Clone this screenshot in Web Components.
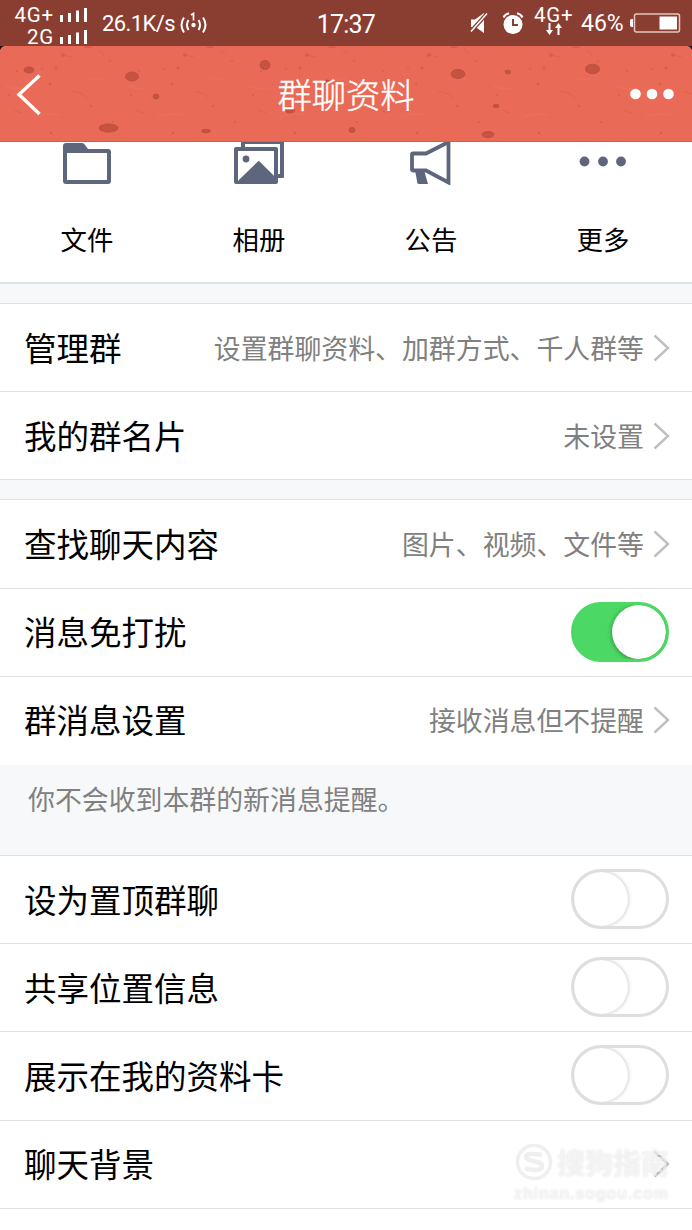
<!DOCTYPE html>
<html lang="zh-CN">
<head>
<meta charset="utf-8">
<title>群聊资料</title>
<style>
    body {
        margin: 0;
        background: #fff;
        color: #000;
        font-family: Roboto, "Noto Sans CJK SC", sans-serif;
    }
</style>
</head>
<body>
<chat-page>
    <status-bar></status-bar>
    <title-bar>群聊资料</title-bar>
    <shortcut-bar>
        <shortcut-item icon="folder">文件</shortcut-item>
        <shortcut-item icon="album">相册</shortcut-item>
        <shortcut-item icon="notice">公告</shortcut-item>
        <shortcut-item icon="more">更多</shortcut-item>
    </shortcut-bar>
    <settings-group spaced>
        <settings-row label="管理群" arrow>设置群聊资料、加群方式、千人群等</settings-row>
        <settings-row label="我的群名片" arrow>未设置</settings-row>
    </settings-group>
    <settings-group spaced>
        <settings-row label="查找聊天内容" arrow>图片、视频、文件等</settings-row>
        <settings-row label="消息免打扰"><toggle-switch on></toggle-switch></settings-row>
        <settings-row label="群消息设置" arrow borderless>接收消息但不提醒</settings-row>
    </settings-group>
    <group-note>你不会收到本群的新消息提醒。</group-note>
    <settings-group>
        <settings-row label="设为置顶群聊"><toggle-switch></toggle-switch></settings-row>
        <settings-row label="共享位置信息"><toggle-switch></toggle-switch></settings-row>
        <settings-row label="展示在我的资料卡"><toggle-switch></toggle-switch></settings-row>
        <settings-row label="聊天背景" arrow></settings-row>
    </settings-group>
    <site-mark></site-mark>
</chat-page>

<script>
// Small base class: every component only has to supply its markup.
class BaseElement extends HTMLElement {
    constructor() {
        super();
        this.attachShadow({ mode: 'open' });
    }

    connectedCallback() {
        this.shadowRoot.innerHTML = this.render();
    }
}

// ### Page frame ###
class ChatPage extends BaseElement {
    render() {
        return `
            <style>
                :host {
                    display: flex;
                    flex-direction: column;
                    position: relative;
                    width: 692px;
                    height: 1230px;
                    overflow: hidden;
                }
            </style>
            <slot></slot>
        `;
    }
}

// ### Phone status bar ###
class StatusBar extends BaseElement {
    render() {
        const bars = `
            <svg width="27" height="14" viewBox="0 0 27 14" fill="#fff">
                <path d="M0 7h3v7H0zM8 5h3v9H8zM16 2.500h3v11.500h-3zM24 0h3v14h-3z"/>
            </svg>`;
        return `
            <style>
                :host {
                    display: grid;
                    grid-template-columns: 236px 220px 236px;
                    height: 46px;
                    background: #8a3e31;
                    color: #fff;
                    font-size: 22px;
                    line-height: 46px;
                    white-space: nowrap;
                }
                .side { display: flex; }
                .left { padding-left: 10px; }
                .signals { width: 77px; padding-top: 5px; }
                .signal {
                    display: flex;
                    justify-content: flex-end;
                    gap: 6px;
                    height: 22px;
                    line-height: 20px;
                    font-size: 20.500px;
                    letter-spacing: .8px;
                }
                .signal svg { margin-top: 3px; }
                .speed { margin-left: 15px; width: 74px; padding-top: 1px; letter-spacing: -.6px; }
                .hotspot { margin: 12px 0 0 4px; }
                .time { font-size: 25px; padding-top: 2px; letter-spacing: -.8px; text-align: center; }
                .mute { margin: 13px 0 0 14px; }
                .alarm { margin: 12px 0 0 14px; }
                .net { width: 42px; margin-left: 10px; padding-top: 5px; font-size: 20.500px; line-height: 20px; letter-spacing: .8px; }
                .net svg { display: block; margin: -2px 0 0 12px; }
                .level { width: 45px; margin-left: 5px; padding-top: 1px; font-size: 23px; }
                .battery { margin: 13px 0 0 4px; }
            </style>
            <div class="side left">
                <div class="signals">
                    <div class="signal"><span>4G+</span>${bars}</div>
                    <div class="signal"><span>2G</span>${bars}</div>
                </div>
                <span class="speed">26.1K/s</span>
                <svg class="hotspot" width="27" height="22" viewBox="0 0 27 22" fill="none" stroke="#fff" stroke-width="2">
                    <circle cx="13.500" cy="13" r="2.200" fill="#fff" stroke="none"/>
                    <path d="M11 3l2.500-1.500V8.500" stroke-width="1.700"/>
                    <path d="M8.500 8q-3 5 0 10M18.500 8q3 5 0 10M4 5.500q-5 7.500 0 15M23 5.500q5 7.500 0 15"/>
                </svg>
            </div>
            <span class="time">17:37</span>
            <div class="side">
                <svg class="mute" width="18" height="21" viewBox="0 0 18 21" fill="none">
                    <path d="M1 6.500h4L14 0v20l-8.500-6H1z" fill="#fff"/>
                    <path d="M1 18.500L17 .5" stroke="#8a3e31" stroke-width="4"/>
                    <path d="M1 18.500L17 .5" stroke="#fff" stroke-width="1.500"/>
                </svg>
                <svg class="alarm" width="22" height="23" viewBox="0 0 22 23" fill="none">
                    <circle cx="11" cy="12.500" r="9.500" fill="#fff"/>
                    <path d="M1.500 5.500Q3 2 7 1.200M20.500 5.500Q19 2 15 1.200" stroke="#fff" stroke-width="2"/>
                    <path d="M11 7v6h5" stroke="#8a3e31" stroke-width="2"/>
                </svg>
                <div class="net">4G+
                    <svg width="16" height="12" viewBox="0 0 16 12" fill="none" stroke="#fff" stroke-width="2">
                        <path d="M3.500 0v9M12.500 12V3"/>
                        <path d="M0 7h7l-3.500 5zM9 5h7l-3.500-5z" fill="#fff" stroke="none"/>
                    </svg>
                </div>
                <span class="level">46%</span>
                <svg class="battery" width="51" height="20" viewBox="0 0 51 20">
                    <path d="M3 6v8H1.500Q0 14 0 12V8Q0 6 1.500 6z" fill="#fff"/>
                    <rect x="4.500" y="1" width="45" height="18" rx="2" fill="none" stroke="#e5c8bd" stroke-width="1.500"/>
                    <rect x="29.500" y="3.500" width="17.500" height="13" fill="#fff"/>
                </svg>
            </div>
        `;
    }
}

// ### Title bar with the speckled theme ###
class TitleBar extends BaseElement {
    render() {
        // cx, cy, rx, ry of the larger craters.
        const craters = [
            [29, 24, 5, 3], [132, 30.500, 6.500, 4.500], [156, 50.500, 2.800, 2.400],
            [108.500, 82, 9.500, 4], [206, 85, 4.500, 1.800], [265, 19, 5, 4.500],
            [290, 64, 4.500, 3], [327, 36, 3, 2], [352, 84, 3, 2.500],
            [458, 28, 7, 4.500], [508, 26, 2.500, 2], [592.500, 23, 7, 4.800],
            [496, 60, 3, 1.700], [488, 88.500, 6, 3]
        ];
        return `
            <style>
                :host {
                    display: grid;
                    grid-template-columns: 200px 1fr 200px;
                    align-items: center;
                    position: relative;
                    box-sizing: border-box;
                    height: 96px;
                    background: #e96a56;
                    color: #fff;
                    border-bottom: 1px solid #d75d52;
                }
                .skin { position: absolute; inset: 0; }
                .back, h1, .dots { position: relative; }
                .back { margin: 3px 0 0 16px; }
                h1 {
                    margin: 5px 0 0;
                    font-size: 34.300px;
                    font-weight: 300;
                    line-height: 50px;
                    text-align: center;
                    -webkit-text-stroke: .4px #fff;
                }
                .dots { justify-self: end; margin-right: 18px; }
            </style>
            <svg class="skin" width="692" height="95">
                <defs>
                    <pattern id="grain" width="122" height="95" patternUnits="userSpaceOnUse">
                        <g fill="#c9503f" opacity=".45">
                            <circle cx="63" cy="9" r="2"/><circle cx="56" cy="22" r="1.600"/>
                            <circle cx="50" cy="38" r="1.500"/><circle cx="91" cy="60" r="1.300"/>
                            <circle cx="51" cy="87" r="1.400"/><circle cx="17" cy="25" r="1"/>
                            <circle cx="9" cy="49" r="1"/><circle cx="42" cy="23" r="1"/>
                            <circle cx="110" cy="15" r="1.100"/><circle cx="113" cy="76" r="1"/>
                            <ellipse cx="88" cy="1" rx="4" ry="1.300"/>
                        </g>
                        <path d="M63 9l9 2M72 45l11 3 4 5M98 3l6 6M14 64l8 3" fill="none" stroke="#c9503f" opacity=".3"/>
                        <path d="M5 40q12 4 20 2M35 71q15-5 25-2M88 32q10 3 15 0" fill="none" stroke="#f28370" opacity=".2" stroke-width="2"/>
                    </pattern>
                </defs>
                <rect width="692" height="95" fill="url(#grain)"/>
                <g fill="#c75240" stroke="#b84e40" stroke-width=".8">
                    ${craters.map(([x, y, rx, ry]) => `<ellipse cx="${x}" cy="${y}" rx="${rx}" ry="${ry}"/>`).join('')}
                </g>
                <path d="M0 0h4Q1 1 0 4zM692 0h-4q3 1 4 4z" fill="#1d0d10"/>
            </svg>
            <svg class="back" width="26" height="42" viewBox="0 0 26 42" fill="none" stroke="#fff" stroke-width="3.400">
                <path d="M23.500 1.500L3 20.500l20.500 19.500"/>
            </svg>
            <h1><slot></slot></h1>
            <svg class="dots" width="44" height="12" viewBox="0 0 44 12" fill="#fff">
                <circle cx="5.500" cy="6" r="5.300"/><circle cx="22" cy="6" r="5.300"/><circle cx="38.500" cy="6" r="5.300"/>
            </svg>
        `;
    }
}

// ### Shortcuts, partly scrolled under the title bar ###
class ShortcutBar extends BaseElement {
    render() {
        return `
            <style>
                :host {
                    display: grid;
                    grid-template-columns: repeat(4, 172px);
                    box-sizing: border-box;
                    height: 142px;
                    padding-left: 1px;
                    border-bottom: 2px solid #dfe3e9;
                }
            </style>
            <slot></slot>
        `;
    }
}

const SHORTCUT_ICONS = {
    folder: `
        <path d="M1 39V4q0-3 3-3h16q2 0 3 2l3 4H46q3 0 3 3v29q0 3-3 3H4q-3 0-3-3z" fill="#5e667d"/>
        <path d="M5 11h40v27H5z" fill="#fff"/>`,
    album: `
        <path d="M7 0h43v35q0 1-1 1H7z" fill="#5e667d"/>
        <path d="M11 2h35v30H11z" fill="#fff"/>
        <rect y="5" width="44" height="37" rx="2" fill="#5e667d"/>
        <path d="M4 9h36v25L25 19 4 39z" fill="#fff"/>
        <path d="M5 38L24.500 19 42 36v5H5z" fill="#5e667d"/>
        <circle cx="12" cy="17" r="3.400" fill="#5e667d"/>`,
    notice: `
        <path d="M7 11.500h13L42.500 0v40.500L20 28.500H7q-1 0-1-1v-15q0-1 1-1z" fill="none" stroke="#5e667d" stroke-width="3.800"/>
        <path d="M9 28h9l4 14h-9q-2 0-2-3z" fill="#5e667d"/>`,
    more: `
        <g fill="#5e667d">
            <circle cx="6.500" cy="19.500" r="4.900"/><circle cx="25" cy="19.500" r="4.900"/><circle cx="43" cy="19.500" r="4.900"/>
        </g>`
};

class ShortcutItem extends BaseElement {
    render() {
        return `
            <style>
                :host {
                    display: flex;
                    flex-direction: column;
                    align-items: center;
                    font-size: 26.400px;
                    line-height: 36px;
                }
                svg { margin-bottom: 38px; }
            </style>
            <svg width="50" height="43" viewBox="0 0 50 43">${SHORTCUT_ICONS[this.getAttribute('icon')]}</svg>
            <span><slot></slot></span>
        `;
    }
}

// ### Settings list ###
// "spaced" puts the grey gap above the group.
class SettingsGroup extends BaseElement {
    render() {
        return `
            <style>
                :host { display: block; }
                .gap { height: 19px; background: #f7f8fa; }
                .rows { border-top: 1px solid #dedfe1; }
            </style>
            ${this.hasAttribute('spaced') ? '<div class="gap"></div>' : ''}
            <div class="rows"><slot></slot></div>
        `;
    }
}

class SettingsRow extends BaseElement {
    render() {
        const arrow = this.hasAttribute('arrow') ? `
            <svg width="17" height="28" viewBox="0 0 17 28" fill="none" stroke="#bfbfbf" stroke-width="2.400">
                <path d="M1.500 1.500L15 14 1.500 26.500"/>
            </svg>` : '';
        return `
            <style>
                :host {
                    display: flex;
                    align-items: center;
                    justify-content: space-between;
                    box-sizing: border-box;
                    height: 88.200px;
                    padding: 0 22px 0 24px;
                    border-bottom: 1px solid #dedfe1;
                }
                :host([borderless]) { border-bottom-color: transparent; }
                .label { font-size: 32.500px; line-height: 48px; padding-top: 4px; }
                .value {
                    display: flex;
                    align-items: center;
                    gap: 9px;
                    color: #808080;
                    font-size: 26.900px;
                    line-height: 40px;
                }
                .text { padding-top: 4px; }
                ::slotted(toggle-switch) { margin: -5px 1px 0 0; }
            </style>
            <span class="label">${this.getAttribute('label')}</span>
            <div class="value"><span class="text"><slot></slot></span>${arrow}</div>
        `;
    }
}

class ToggleSwitch extends BaseElement {
    render() {
        return `
            <style>
                :host {
                    display: block;
                    box-sizing: border-box;
                    width: 98px;
                    height: 60px;
                    border: 3px solid #dedede;
                    border-radius: 30px;
                    overflow: hidden;
                }
                .knob {
                    width: 54px;
                    height: 54px;
                    border-radius: 50%;
                    background: #fff;
                    box-shadow: 0 0 4px rgba(0, 0, 0, .28);
                }
                :host([on]) { background: #4cd864; border-color: #4cd864; }
                :host([on]) .knob { margin-left: 38px; box-shadow: 0 1px 5px rgba(0, 0, 0, .4); }
            </style>
            <div class="knob"></div>
        `;
    }
}

class GroupNote extends BaseElement {
    render() {
        return `
            <style>
                :host {
                    display: block;
                    box-sizing: border-box;
                    height: 90px;
                    padding: 16px 28px 0;
                    background: #f7f8fa;
                    color: #808080;
                    font-size: 26.900px;
                    line-height: 40px;
                }
            </style>
            <slot></slot>
        `;
    }
}

// ### Pale site mark lying over the last row ###
class SiteMark extends BaseElement {
    render() {
        return `
            <style>
                :host {
                    display: block;
                    position: absolute;
                    left: 514px;
                    top: 1142px;
                    width: 160px;
                    color: rgba(255, 255, 255, .6);
                    text-shadow: 0 0 2px rgba(150, 150, 150, .3);
                    white-space: nowrap;
                }
                .brand { display: flex; align-items: center; gap: 3px; height: 40px; font-size: 28px; font-weight: 700; }
                .url { font: 700 16px/20px "Liberation Sans", sans-serif; letter-spacing: .9px; margin-top: 2px; }
            </style>
            <div class="brand">
                <svg width="40" height="40" viewBox="0 0 40 40" fill="none" stroke="#efefef">
                    <circle cx="20" cy="20" r="16.500" stroke-width="3.500"/>
                    <path d="M28 13q-16-3-16 2c0 5 16 3 16 9 0 5-8 5-17 2" stroke-width="4.500"/>
                </svg>
                <span>搜狗指南</span>
            </div>
            <div class="url">zhinan.sogou.com</div>
        `;
    }
}

customElements.define('chat-page', ChatPage);
customElements.define('status-bar', StatusBar);
customElements.define('title-bar', TitleBar);
customElements.define('shortcut-bar', ShortcutBar);
customElements.define('shortcut-item', ShortcutItem);
customElements.define('settings-group', SettingsGroup);
customElements.define('settings-row', SettingsRow);
customElements.define('toggle-switch', ToggleSwitch);
customElements.define('group-note', GroupNote);
customElements.define('site-mark', SiteMark);
</script>
</body>
</html>
